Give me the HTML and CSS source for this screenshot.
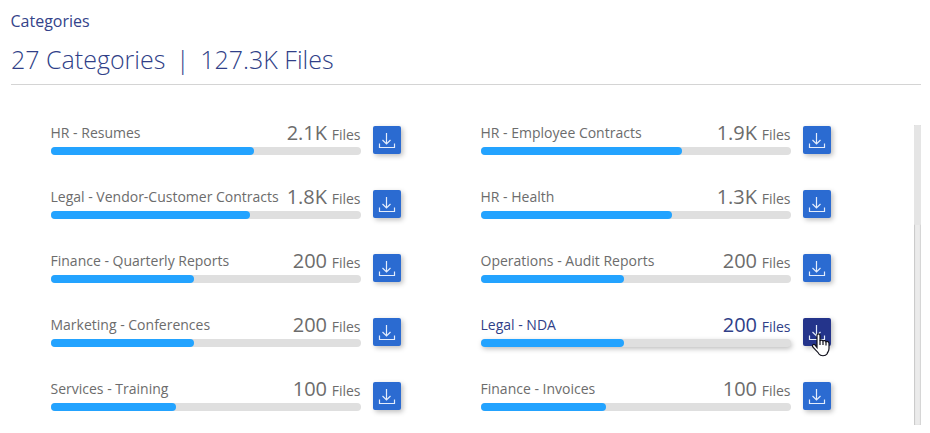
FILE: index.html
```
<!DOCTYPE html>
<html lang="en">
<head>
<meta charset="utf-8">
<title>Categories</title>
<link rel="stylesheet" href="styles.css">
</head>
<body>
<svg class="defs" width="0" height="0"><symbol id="download" viewBox="0 0 28 28"><path d="M13.5 7v10.500M9.500 14l4 4 4-4M6.500 17.500v4h15v-4" fill="none" stroke="#e4edfc" stroke-width="1.200"/></symbol></svg>
<main class="panel">
<h1 class="title">Categories</h1>
<div class="summary"><span>27 Categories</span><span class="divider">|</span><span>127.3K Files</span></div>
<div class="viewport">
<div class="grid">
<div class="item"><div class="info"><div class="labels"><span class="name">HR - Resumes</span><span class="count"><b>2.1K</b> Files</span></div><div class="bar"><div class="fill" style="width:203px"></div></div></div><button class="btn"><svg><use href="#download"/></svg></button></div>
<div class="item"><div class="info"><div class="labels"><span class="name">HR - Employee Contracts</span><span class="count"><b>1.9K</b> Files</span></div><div class="bar"><div class="fill" style="width:201px"></div></div></div><button class="btn"><svg><use href="#download"/></svg></button></div>
<div class="item"><div class="info"><div class="labels"><span class="name">Legal - Vendor-Customer Contracts</span><span class="count"><b>1.8K</b> Files</span></div><div class="bar"><div class="fill" style="width:199px"></div></div></div><button class="btn"><svg><use href="#download"/></svg></button></div>
<div class="item"><div class="info"><div class="labels"><span class="name">HR - Health</span><span class="count"><b>1.3K</b> Files</span></div><div class="bar"><div class="fill" style="width:191px"></div></div></div><button class="btn"><svg><use href="#download"/></svg></button></div>
<div class="item"><div class="info"><div class="labels"><span class="name">Finance - Quarterly Reports</span><span class="count"><b>200</b> Files</span></div><div class="bar"><div class="fill" style="width:143px"></div></div></div><button class="btn"><svg><use href="#download"/></svg></button></div>
<div class="item"><div class="info"><div class="labels"><span class="name">Operations - Audit Reports</span><span class="count"><b>200</b> Files</span></div><div class="bar"><div class="fill" style="width:143px"></div></div></div><button class="btn"><svg><use href="#download"/></svg></button></div>
<div class="item"><div class="info"><div class="labels"><span class="name">Marketing - Conferences</span><span class="count"><b>200</b> Files</span></div><div class="bar"><div class="fill" style="width:143px"></div></div></div><button class="btn"><svg><use href="#download"/></svg></button></div>
<div class="item active"><div class="info"><div class="labels"><span class="name">Legal - NDA</span><span class="count"><b>200</b> Files</span></div><div class="bar"><div class="fill" style="width:143px"></div></div></div><button class="btn"><svg><use href="#download"/></svg><svg class="cursor" viewBox="0 0 20 24"><path d="M6 14.500V2.500c0-2.200 3-2.200 3 0v5.500c.7-1.300 2.700-1.200 3 .2.800-1 2.600-.8 3 .6 1-.8 3-.2 3 1.700v5c0 3-1.500 3.500-2 5.500-1.500 2.300-6.500 2.300-8 0C7.300 19 3.500 16.500 1.600 13.700c-.8-1.700 1-2.900 2.300-1.900z" fill="#fff" stroke="#10101c" stroke-width="1.200"/><path d="M9 7.500v4.500M12 8.500v3.500M15 9v3.500" fill="none" stroke="#10101c" stroke-width="1.200"/></svg></button></div>
<div class="item"><div class="info"><div class="labels"><span class="name">Services - Training</span><span class="count"><b>100</b> Files</span></div><div class="bar"><div class="fill" style="width:125px"></div></div></div><button class="btn"><svg><use href="#download"/></svg></button></div>
<div class="item"><div class="info"><div class="labels"><span class="name">Finance - Invoices</span><span class="count"><b>100</b> Files</span></div><div class="bar"><div class="fill" style="width:125px"></div></div></div><button class="btn"><svg><use href="#download"/></svg></button></div>
</div>
<div class="scrollbar"><div class="thumb"></div></div>
</div>
</main>
</body>
</html>
```
FILE: styles.css
```
* { box-sizing: border-box; }
body { margin: 0; background: #fff; font-family: "Open Sans", sans-serif; font-size: 14px; color: #6c6c6c; overflow: hidden; }
.defs { display: block; }
.panel { width: 910px; margin-left: 11px; padding-top: 10px; }
.title { margin: 0 0 0 -0.5px; font-size: 16px; line-height: 22px; font-weight: 400; color: #34438a; }
.summary { height: 53px; padding-top: 9px; border-bottom: 1px solid #d4d4d4; display: flex; font-size: 25px; line-height: 36px; font-weight: 300; color: #303f88; white-space: nowrap; }
.divider { width: 35px; text-align: center; }
.viewport { display: flex; justify-content: space-between; height: 300px; margin-top: 40px; }
.grid { display: grid; grid-template-columns: 350px 350px; grid-auto-rows: 64px; column-gap: 80px; margin-left: 40px; }
.item { display: flex; gap: 12px; }
.info { width: 310px; }
.labels { display: flex; justify-content: space-between; height: 22px; margin: 0 0.5px 0 -0.5px; white-space: nowrap; }
.name { line-height: 15px; }
.count { line-height: 18px; }
.count b { font-size: 20px; font-weight: 400; line-height: 16px; margin-right: 1px; }
.bar { height: 8px; border-radius: 4px; background: #dfdfdf; }
.fill { height: 8px; border-radius: 4px; background: #23a3ff; }
.btn { position: relative; flex: none; width: 28px; height: 28px; margin: 1px 0 0; padding: 0; border: 0; border-radius: 2px; background: #2b6bd1; box-shadow: 2px 2px 5px rgba(0,0,0,.25); }
.btn svg { display: block; width: 28px; height: 28px; }
.active { color: #303f88; }
.active .bar { box-shadow: 1px 2px 5px rgba(0,0,0,.25); }
.active .btn { background: #24348b; }
.btn .cursor { position: absolute; left: 8px; top: 15px; width: 20px; height: 24px; }
.scrollbar { width: 7px; height: 300px; background: #ebebeb; box-shadow: inset 1px 0 1px #c8c8c8, inset -1px 0 1px #d4d4d4; }
.thumb { height: 100px; background: #e5e5e5; border-radius: 1px; }
```
